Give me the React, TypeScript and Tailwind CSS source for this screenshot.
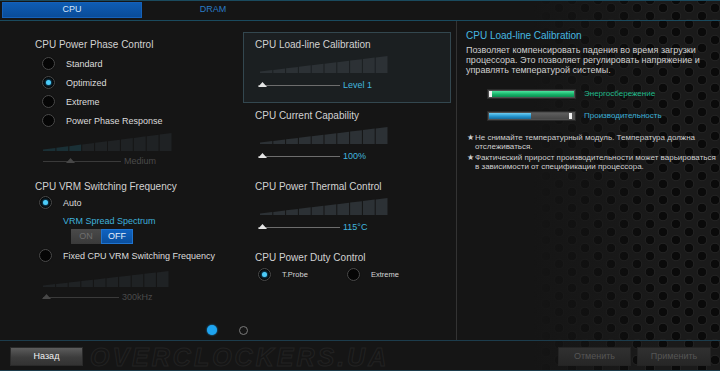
import type { ReactNode } from 'react'

const sans = "font-['Liberation_Sans',Arial,sans-serif]"

function Radio({ on }: { on?: boolean }) {
  return (
    <span className="flex h-[13px] w-[13px] shrink-0 items-center justify-center rounded-full border border-[#4c4c4c] bg-[#050505] shadow-[0_0_1px_#000]">
      {on && <span className="h-[5px] w-[5px] rounded-full bg-[#4cccf8] shadow-[0_0_3px_#27b4ff]" />}
    </span>
  )
}

function RadioRow({ on, label, ml = 'ml-[7px]' }: { on?: boolean; label: string; ml?: string }) {
  return (
    <div className={`flex h-[19px] items-center ${ml}`}>
      <Radio on={on} />
      <span className="ml-[11px] text-[9px] leading-[12px] text-[#dcdcdc]">{label}</span>
    </div>
  )
}

// stepped ramp drawn behind every slider
function Wedge({ w, h, dim, tint = 0 }: { w: number; h: number; dim?: boolean; tint?: number }) {
  const n = 10
  const seg = w / n
  const top = (x: number) => h - (1.5 + ((h - 1.5) * x) / w)
  const base = dim ? '#1f2224' : '#2c3135'
  const tinted = dim ? '#1a3036' : '#1f4a55'
  return (
    <svg width={w} height={h} className="block">
      {Array.from({ length: n }).map((_, i) => {
        const x0 = i * seg + (i ? 0.5 : 0)
        const x1 = (i + 1) * seg - 0.5
        return (
          <polygon
            key={i}
            points={`${x0},${h} ${x0},${top(x0)} ${x1},${top(x1)} ${x1},${h}`}
            fill={i < tint ? tinted : base}
          />
        )
      })}
    </svg>
  )
}

function Slider({ pos, value, dim, track = 80 }: { pos: number; value: string; dim?: boolean; track?: number }) {
  return (
    <div className="flex h-[10px] items-center">
      <div className="relative h-[10px]" style={{ width: track }}>
        <div className={`absolute left-0 right-0 top-[5px] h-px ${dim ? 'bg-[#3a3a3a]' : 'bg-[#6d6d6d]'}`} />
        <svg className="absolute top-[2px]" style={{ left: pos }} width={9} height={5}>
          <polygon points="0,5 4.5,0 9,5" fill={dim ? '#474747' : '#e4e4e4'} />
        </svg>
      </div>
      <span className={`ml-[3px] text-[9px] leading-[12px] ${dim ? 'text-[#4a4a4a]' : 'text-[#42b6df]'}`}>{value}</span>
    </div>
  )
}

function Block({ title, active, children }: { title: string; active?: boolean; children: ReactNode }) {
  return (
    <div className={`h-[71px] border px-[11px] pt-[6px] ${active ? 'border-[#33474f] bg-[#1b1f21]' : 'border-transparent'}`}>
      <div className="text-[10px] leading-[12px] text-[#d2d2d2]">{title}</div>
      {children}
    </div>
  )
}

function SliderBlock({ title, value, active }: { title: string; value: string; active?: boolean }) {
  return (
    <Block title={title} active={active}>
      <div className="ml-[5px] mt-[5px]">
        <Wedge w={128} h={17} />
      </div>
      <div className="ml-[3px] mt-[7px]">
        <Slider pos={0} value={value} track={82} />
      </div>
    </Block>
  )
}

function Meter({ kind }: { kind: 'green' | 'blue' }) {
  return (
    <div className="flex h-[10px] w-[89px] items-stretch border border-[#2a2a2a] bg-[#4f4f4f] p-px">
      {kind === 'green' ? (
        <>
          <div className="w-[3px] bg-[#f0f0f0]" />
          <div className="flex-1 bg-[linear-gradient(#4fe3a0,#17b46a_55%,#0d8a50)]" />
        </>
      ) : (
        <>
          <div className="w-[42px] bg-[linear-gradient(#6fcdf2,#2596cf_55%,#17699a)]" />
          <div className="flex-1 bg-[linear-gradient(#5e5e5e,#474747)]" />
          <div className="w-[3px] bg-[#f0f0f0]" />
          <div className="w-[2px] bg-[#555]" />
        </>
      )}
    </div>
  )
}

function Note({ lines }: { lines: string[] }) {
  return (
    <div className="flex text-[8px] leading-[9px] text-[#cfcfcf]">
      <span className="ml-px w-[8px] shrink-0">★</span>
      <div>
        {lines.map(l => (
          <div key={l} className="whitespace-nowrap">{l}</div>
        ))}
      </div>
    </div>
  )
}

export default function App() {
  return (
    <div
      className={`${sans} relative flex h-[371px] w-[720px] flex-col overflow-hidden bg-[linear-gradient(90deg,#151515_0%,#151515_74%,rgba(21,21,21,0.55)_82%,rgba(21,21,21,0)_92%),radial-gradient(circle,#0a0a0a_0_4px,#232323_4.6px,transparent_5.6px),radial-gradient(circle,#0a0a0a_0_4px,#232323_4.6px,transparent_5.6px),linear-gradient(#1a1a1a,#1a1a1a)] bg-[length:100%_100%,26px_16px,26px_16px,100%_100%] bg-[position:0_0,0_0,13px_8px,0_0]`}
    >
      {/* Tabs */}
      <div className="flex h-[21px] shrink-0 border-y border-[#1a4a5e] pl-[2px] pt-px">
        <div className="flex h-[16px] w-[140px] items-center justify-center border border-[#1661b8] bg-[linear-gradient(#0e5cb3,#0a4c98)] text-[9px] text-[#d6e6fa]">
          CPU
        </div>
        <div className="flex h-[16px] w-[142px] items-center justify-center text-[9px] text-[#2b7bc4]">DRAM</div>
      </div>

      {/* Main */}
      <div className="flex h-[319px] shrink-0">
        <div className="flex w-[456px] flex-col">
          <div className="flex flex-1">
            {/* Left column */}
            <div className="w-[240px] pl-[35px] pt-[18px]">
              <div className="text-[10px] leading-[12px] text-[#d2d2d2]">CPU Power Phase Control</div>
              <div className="mt-[3px]">
                <RadioRow label="Standard" />
                <RadioRow label="Optimized" on />
                <RadioRow label="Extreme" />
                <RadioRow label="Power Phase Response" />
              </div>
              <div className="ml-[8px] mt-[3px]">
                <Wedge w={129} h={18} dim tint={3} />
              </div>
              <div className="ml-[8px] mt-[5px]">
                <Slider pos={23} value="Medium" dim track={78} />
              </div>

              <div className="mt-[15px] text-[10px] leading-[12px] text-[#d2d2d2]">CPU VRM Switching Frequency</div>
              <RadioRow label="Auto" on ml="ml-[4px]" />
              <div className="ml-[28px] mt-[3px] text-[9px] leading-[12px] text-[#3fb2dc]">VRM Spread Spectrum</div>
              <div className="ml-[36px] mt-[2px] flex h-[15px] w-[62px] text-[9px]">
                <div className="flex flex-1 items-center justify-center bg-[linear-gradient(#4a4a4a,#3a3a3a)] text-[#6e6e6e]">ON</div>
                <div className="flex flex-1 items-center justify-center border border-[#1f74d0] bg-[linear-gradient(#0f62c0,#0a4f9e)] text-[#e4eefa]">OFF</div>
              </div>
              <div className="mt-[2px]">
                <RadioRow label="Fixed CPU VRM Switching Frequency" ml="ml-[4px]" />
              </div>
              <div className="ml-[8px] mt-[6px]">
                <Wedge w={126} h={16} dim />
              </div>
              <div className="ml-[8px] mt-[5px]">
                <Slider pos={-1} value="300kHz" dim track={76} />
              </div>
            </div>

            {/* Middle column */}
            <div className="w-[216px] pl-[3px] pr-[5px] pt-[11px]">
              <SliderBlock title="CPU Load-line Calibration" value="Level 1" active />
              <SliderBlock title="CPU Current Capability" value="100%" />
              <SliderBlock title="CPU Power Thermal Control" value="115°C" />
              <Block title="CPU Power Duty Control">
                <div className="ml-[3px] mt-[4px] flex h-[13px] items-center text-[7.5px] text-[#d6d6d6]">
                  <div className="flex w-[89px] items-center">
                    <Radio on />
                    <span className="ml-[11px]">T.Probe</span>
                  </div>
                  <Radio />
                  <span className="ml-[11px]">Extreme</span>
                </div>
              </Block>
            </div>
          </div>

          {/* Page dots */}
          <div className="flex h-[20px] items-center justify-center gap-[22px] pr-[2px]">
            <span className="h-[10px] w-[10px] rounded-full bg-[#1ea4f0] shadow-[0_0_2px_#1ea4f0]" />
            <span className="h-[9px] w-[9px] rounded-full border-[1.5px] border-[#7a7a7a]" />
          </div>
        </div>

        {/* Help panel */}
        <div className="flex-1 border-l border-[#333] pl-[9px] pt-[9px]">
          <div className="text-[10px] leading-[12px] text-[#45b8e0]">CPU Load-line Calibration</div>
          <div className="mt-[3px] text-[9px] leading-[10px] text-[#d0d0d0]">
            <div className="whitespace-nowrap">Позволяет компенсировать падения во время загрузки</div>
            <div className="whitespace-nowrap">процессора. Это позволяет регулировать напряжение и</div>
            <div className="whitespace-nowrap">управлять температурой системы.</div>
          </div>
          <div className="ml-[21px] mt-[14px] flex items-center">
            <Meter kind="green" />
            <span className="ml-[8px] text-[8px] leading-[10px] text-[#22bd8c]">Энергосбережение</span>
          </div>
          <div className="ml-[21px] mt-[12px] flex items-center">
            <Meter kind="blue" />
            <span className="ml-[8px] text-[8px] leading-[10px] text-[#3bb0d6]">Производительность</span>
          </div>
          <div className="mt-[12px] flex flex-col gap-[2px]">
            <Note lines={['Не снимайте температурный модуль. Температура должна', 'отслеживаться.']} />
            <Note lines={['Фактический прирост производительности может варьироваться', 'в зависимости от спецификации процессора.']} />
          </div>
        </div>
      </div>

      {/* Footer */}
      <div className="relative flex h-[31px] shrink-0 items-start border-y border-[#1c3c4c] px-[9px] pt-[6px] pl-[10px]">
        <span className="pointer-events-none absolute left-[90px] top-[1px] text-[25px] font-bold italic leading-[30px] tracking-[3px] text-transparent [-webkit-text-stroke:1px_#222]">
          OVERCLOCKERS.UA
        </span>
        <button className="relative flex h-[19px] w-[73px] items-center justify-center border border-[#2a2a2a] bg-[linear-gradient(#5c5c5c,#3c3c3c_55%,#333)] text-[9px] text-[#f2f2f2]">
          Назад
        </button>
        <div className="flex-1" />
        <button className="flex h-[19px] w-[73px] items-center justify-center border border-[#242424] bg-[linear-gradient(#303030,#262626)] text-[9px] text-[#555]">
          Отменить
        </button>
        <button className="ml-[6px] flex h-[19px] w-[74px] items-center justify-center border border-[#242424] bg-[linear-gradient(#303030,#262626)] text-[9px] text-[#555]">
          Применить
        </button>
      </div>
    </div>
  )
}
